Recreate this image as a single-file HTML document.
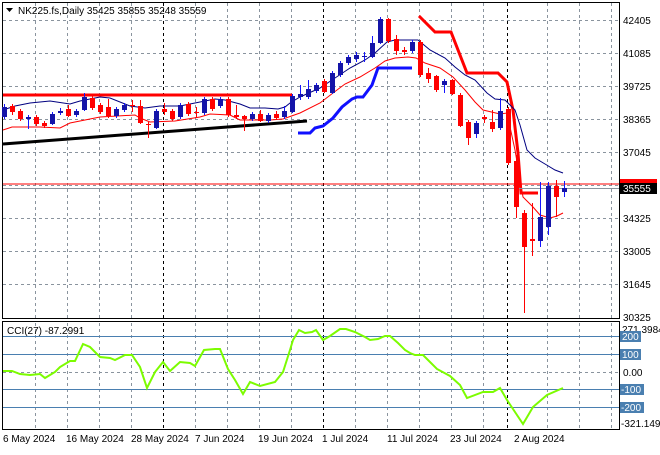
<!DOCTYPE html>
<html><head><meta charset="utf-8"><style>
html,body{margin:0;padding:0;background:#fff;}
body{width:660px;height:450px;overflow:hidden;font-family:"Liberation Sans",sans-serif;}
svg text{font-family:"Liberation Sans",sans-serif;font-size:10px;}
</style></head><body>
<svg width="660" height="450" viewBox="0 0 660 450" xmlns="http://www.w3.org/2000/svg">
<rect width="660" height="450" fill="#fff"/>
<!-- grid main -->
<g stroke="#8a949e" stroke-width="1" stroke-dasharray="3,3">
<path d="M3 20.5H619M3 53.5H619M3 86.5H619M3 119.5H619M3 152.5H619M3 185.5H619M3 218.5H619M3 251.5H619M3 284.5H619"/>
<path d="M35.5 3V318M67.5 3V318M99.5 3V318M131.5 3V318M195.5 3V318M227.5 3V318M259.5 3V318M291.5 3V318M355.5 3V318M387.5 3V318M419.5 3V318M451.5 3V318M483.5 3V318M547.5 3V318M579.5 3V318M611.5 3V318"/>
<path d="M35.5 323V429M67.5 323V429M99.5 323V429M131.5 323V429M195.5 323V429M227.5 323V429M259.5 323V429M291.5 323V429M355.5 323V429M387.5 323V429M419.5 323V429M451.5 323V429M483.5 323V429M547.5 323V429M579.5 323V429M611.5 323V429"/>
<path d="M3 372.5H619"/>
</g>
<g stroke="#000" stroke-width="1" stroke-dasharray="3,3">
<path d="M163.5 3V318M323.5 3V318M507.5 3V318M163.5 323V429M323.5 323V429M507.5 323V429"/>
</g>
<!-- CCI levels -->
<g stroke="#4a7fb0" stroke-width="1">
<path d="M3 336.5H619M3 354.5H619M3 389.5H619M3 407.5H619"/>
</g>
<!-- frames -->
<rect x="2.5" y="2.5" width="617" height="316" fill="none" stroke="#000"/>
<rect x="2.5" y="321.5" width="617" height="108" fill="none" stroke="#000"/>
<!-- horizontal thick red -->
<path d="M3 95H292" stroke="#f00" stroke-width="3"/>
<!-- black trend -->
<path d="M3 144L307 121" stroke="#000" stroke-width="3"/>
<!-- thick blue -->
<path d="M298 133L310 133L315 128L323 126L333 118L342 107L352 99L357 97L363 97L372 85L378 68L412 68" fill="none" stroke="#1010ff" stroke-width="3"/>
<!-- thick red upper -->
<path d="M419 16L435 32L451 32L467 73L498 73L507 82L513 110L518 153L521 193L538 193" fill="none" stroke="#f00" stroke-width="3"/>
<!-- thin red MA -->
<path d="M3 130L12 127L40 127L60 128L70 123L100 117L135 115L140 118L150 122L175 121L200 117L210 114L230 115L240 120L270 120L283 119L300 113L320 103L333 93L345 84L360 77L375 68L385 61L395 58L408 57L416 58L425 63L440 68L453 77L465 90L475 102L483 110L500 114L507 113L515 150L523 197L533 207L540 215L550 218L557 216L563 213" fill="none" stroke="#f00" stroke-width="1"/>
<!-- thin navy MA -->
<path d="M3 110L15 106L30 103L50 101L70 104L80 101L100 97L110 98L130 106L145 108L160 106L180 106L200 102L215 99L225 100L240 104L250 108L265 108L278 109L285 107L290 103L300 97L320 88L335 78L350 68L365 60L375 53L387 42L395 40L418 40L430 50L445 58L455 67L465 75L475 80L487 93L495 99L505 100L515 110L520 125L527 150L535 158L545 164L555 170L563 173" fill="none" stroke="#000080" stroke-width="1"/>
<!-- price lines -->
<path d="M3 184H619" stroke="#f00" stroke-width="1"/>
<path d="M3 188.5H619" stroke="#8a949e" stroke-width="1"/>
<!-- red candles -->
<g fill="#f00" stroke="#f00" stroke-width="1">
<path d="M12.5 104V115M20.5 109V121M36.5 115V126M44.5 121V128M68.5 105V117M92.5 96V110M100.5 103V114M108.5 99V118M132.5 100V112M140.5 100V124M148.5 122V138M164.5 103V115M172.5 109V121M188.5 102V116M196.5 107V118M212.5 97V111M228.5 97V117M236.5 105V119M244.5 115V131M260.5 110V122M276.5 111V120M324.5 79V93M388.5 18V43M396.5 35V55M404.5 47V55M420.5 40V77M428.5 68V83M436.5 75V92M452.5 79V95M460.5 93V127M468.5 120V145M484.5 115V123M492.5 110V132M508.5 107V165M516.5 155V218M524.5 210V313M532.5 203V256M556.5 180V217" fill="none"/>
<rect x="10" y="106" width="5" height="6" stroke="none"/>
<rect x="18" y="111" width="5" height="8" stroke="none"/>
<rect x="34" y="117" width="5" height="7" stroke="none"/>
<rect x="42" y="123" width="5" height="3" stroke="none"/>
<rect x="66" y="109" width="5" height="7" stroke="none"/>
<rect x="90" y="98" width="5" height="10" stroke="none"/>
<rect x="98" y="105" width="5" height="7" stroke="none"/>
<rect x="106" y="107" width="5" height="9" stroke="none"/>
<rect x="130" y="105" width="5" height="1" stroke="none"/>
<rect x="138" y="106" width="5" height="17" stroke="none"/>
<rect x="146" y="124" width="5" height="1" stroke="none"/>
<rect x="162" y="109" width="5" height="3" stroke="none"/>
<rect x="170" y="111" width="5" height="8" stroke="none"/>
<rect x="186" y="104" width="5" height="10" stroke="none"/>
<rect x="194" y="112" width="5" height="1" stroke="none"/>
<rect x="210" y="99" width="5" height="10" stroke="none"/>
<rect x="226" y="99" width="5" height="16" stroke="none"/>
<rect x="234" y="115" width="5" height="2" stroke="none"/>
<rect x="242" y="116" width="5" height="3" stroke="none"/>
<rect x="258" y="114" width="5" height="7" stroke="none"/>
<rect x="274" y="114" width="5" height="4" stroke="none"/>
<rect x="322" y="81" width="5" height="11" stroke="none"/>
<rect x="386" y="19" width="5" height="22" stroke="none"/>
<rect x="394" y="39" width="5" height="12" stroke="none"/>
<rect x="402" y="50" width="5" height="2" stroke="none"/>
<rect x="418" y="42" width="5" height="33" stroke="none"/>
<rect x="426" y="73" width="5" height="6" stroke="none"/>
<rect x="434" y="76" width="5" height="14" stroke="none"/>
<rect x="450" y="80" width="5" height="14" stroke="none"/>
<rect x="458" y="95" width="5" height="31" stroke="none"/>
<rect x="466" y="122" width="5" height="16" stroke="none"/>
<rect x="482" y="117" width="5" height="2" stroke="none"/>
<rect x="490" y="122" width="5" height="7" stroke="none"/>
<rect x="506" y="109" width="5" height="54" stroke="none"/>
<rect x="514" y="161" width="5" height="46" stroke="none"/>
<rect x="522" y="213" width="5" height="34" stroke="none"/>
<rect x="530" y="239" width="5" height="2" stroke="none"/>
<rect x="554" y="186" width="5" height="11" stroke="none"/>
</g>
<!-- blue candles -->
<g fill="#1414a8" stroke="#1414ff" stroke-width="1">
<path d="M4.5 104V119M28.5 115V129M52.5 112V125M60.5 108V115M76.5 109V117M84.5 93V111M116.5 107V118M124.5 103V112M156.5 109V129M180.5 103V119M204.5 97V115M220.5 97V108M252.5 112V121M268.5 113V123M284.5 106V119M292.5 94V113M300.5 85V100M308.5 80V99M316.5 83V93M332.5 71V94M340.5 61V77M348.5 55V65M356.5 52V62M364.5 52V62M372.5 36V58M380.5 17V44M412.5 40V53M444.5 79V93M476.5 121V138M500.5 98V130M540.5 182V247M548.5 182V235M564.5 181V197" fill="none"/>
<rect x="2" y="107" width="5" height="10" stroke="none"/>
<rect x="26" y="117" width="5" height="2" stroke="none"/>
<rect x="50" y="114" width="5" height="10" stroke="none"/>
<rect x="58" y="111" width="5" height="2" stroke="none"/>
<rect x="74" y="111" width="5" height="4" stroke="none"/>
<rect x="82" y="97" width="5" height="13" stroke="none"/>
<rect x="114" y="109" width="5" height="7" stroke="none"/>
<rect x="122" y="105" width="5" height="5" stroke="none"/>
<rect x="154" y="111" width="5" height="17" stroke="none"/>
<rect x="178" y="105" width="5" height="12" stroke="none"/>
<rect x="202" y="99" width="5" height="14" stroke="none"/>
<rect x="218" y="99" width="5" height="7" stroke="none"/>
<rect x="250" y="114" width="5" height="5" stroke="none"/>
<rect x="266" y="115" width="5" height="6" stroke="none"/>
<rect x="282" y="111" width="5" height="6" stroke="none"/>
<rect x="290" y="96" width="5" height="16" stroke="none"/>
<rect x="298" y="94" width="5" height="3" stroke="none"/>
<rect x="306" y="89" width="5" height="8" stroke="none"/>
<rect x="314" y="85" width="5" height="6" stroke="none"/>
<rect x="330" y="73" width="5" height="20" stroke="none"/>
<rect x="338" y="63" width="5" height="12" stroke="none"/>
<rect x="346" y="57" width="5" height="6" stroke="none"/>
<rect x="354" y="55" width="5" height="4" stroke="none"/>
<rect x="362" y="56" width="5" height="1" stroke="none"/>
<rect x="370" y="43" width="5" height="14" stroke="none"/>
<rect x="378" y="19" width="5" height="24" stroke="none"/>
<rect x="410" y="42" width="5" height="9" stroke="none"/>
<rect x="442" y="81" width="5" height="4" stroke="none"/>
<rect x="474" y="123" width="5" height="11" stroke="none"/>
<rect x="498" y="111" width="5" height="17" stroke="none"/>
<rect x="538" y="217" width="5" height="24" stroke="none"/>
<rect x="546" y="186" width="5" height="41" stroke="none"/>
<rect x="562" y="188" width="5" height="4" stroke="none"/>
</g>
<!-- CCI line -->
<path d="M3 371L12 371L20 374L30 375L40 374L45 378L55 372L60 367L70 361L75 361L83 344L90 347L100 357L110 358L115 360L125 355L132 355L140 367L147 388L155 372L163 362L170 371L180 362L190 363L195 366L204 350L215 349L220 349L228 369L235 380L243 394L250 382L260 386L275 382L283 372L290 350L293 340L299 330L305 333L312 332L316 330L323 340L330 336L340 329L346 329L355 332L365 337L370 340L378 339L385 336L390 336L398 343L405 350L410 353L415 355L423 355L430 362L437 369L450 376L460 385L467 398L483 392L493 392L500 388L507 400L523 424L533 407L547 395L563 388" fill="none" stroke="#7cfc00" stroke-width="2"/>
<!-- header -->
<path d="M6 8H13L9.5 12Z" fill="#000"/>
<text x="18" y="14" fill="#000">NK225.fs,Daily  35425 35855 35248 35559</text>
<text x="7" y="334" fill="#000">CCI(27) -87.2991</text>
<!-- right axis main -->
<g fill="#000">
<text x="623" y="24">42405</text>
<text x="623" y="57">41085</text>
<text x="623" y="90">39725</text>
<text x="623" y="123">38365</text>
<text x="623" y="156">37045</text>
<text x="623" y="222">34325</text>
<text x="623" y="255">33005</text>
<text x="623" y="288">31645</text>
<text x="623" y="321">30325</text>
</g>
<rect x="620" y="179" width="37" height="9" fill="#f00"/>
<rect x="620" y="183" width="37" height="11" fill="#000"/>
<text x="623" y="192" fill="#fff">35555</text>
<!-- right axis CCI -->
<text x="622" y="333" fill="#000">271.3984</text>
<rect x="620" y="331" width="21" height="11" fill="#4a7fb0"/><text x="622" y="340" fill="#fff">200</text>
<rect x="620" y="349" width="21" height="11" fill="#4a7fb0"/><text x="622" y="358" fill="#fff">100</text>
<text x="623" y="376" fill="#000">0.00</text>
<rect x="620" y="384" width="24" height="11" fill="#4a7fb0"/><text x="621" y="393" fill="#fff">-100</text>
<rect x="620" y="402" width="24" height="11" fill="#4a7fb0"/><text x="621" y="411" fill="#fff">-200</text>
<text x="621" y="427" fill="#000">-321.1494</text>
<!-- date axis -->
<g fill="#000">
<text x="3" y="442">6 May 2024</text>
<text x="66" y="442">16 May 2024</text>
<text x="131" y="442">28 May 2024</text>
<text x="195" y="442">7 Jun 2024</text>
<text x="258" y="442">19 Jun 2024</text>
<text x="322" y="442">1 Jul 2024</text>
<text x="387" y="442">11 Jul 2024</text>
<text x="450" y="442">23 Jul 2024</text>
<text x="514" y="442">2 Aug 2024</text>
</g>
</svg>
</body></html>
